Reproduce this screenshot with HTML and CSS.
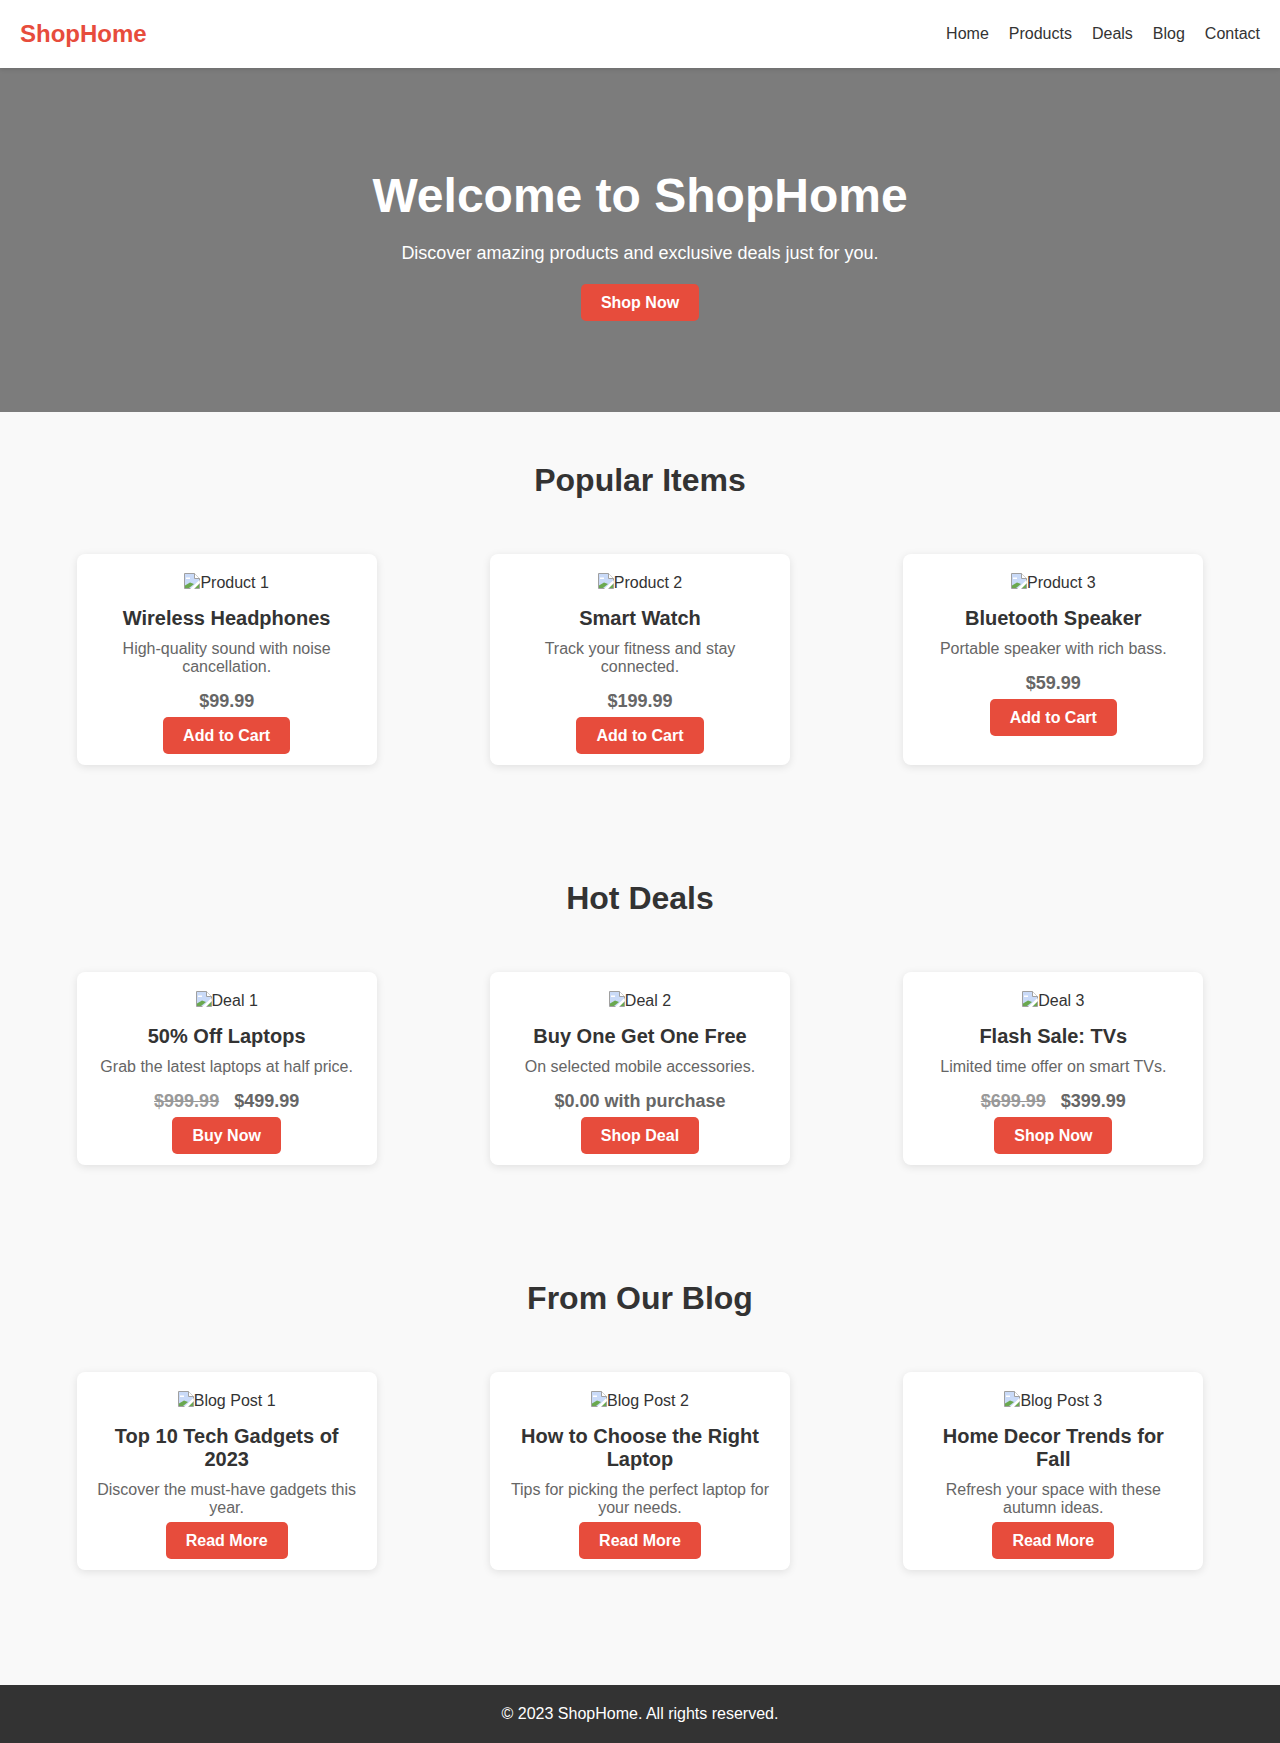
FILE: index.html
```html
<!DOCTYPE html>
<html lang="en">
<head>
    <meta charset="UTF-8">
    <meta name="viewport" content="width=device-width, initial-scale=1.0">
    <title>ShopHome</title>
    <link rel="stylesheet" href="styles.css">
</head>
<body>
    <svg class="sprite" width="0" height="0">
        <symbol id="broken" viewBox="0 0 16 16">
            <path d="M0.5 0.5H10.5L15.5 5.5V15.5H0.5Z" fill="#c9daf8" stroke="#a0a0a0"/>
            <path d="M10.5 0.5V5.5H15.5" fill="#fff" stroke="#a0a0a0"/>
            <path d="M2 4.5h4v1.5H2z" fill="#fff"/>
            <path d="M1 15V12.5L6 9.5L10 11L5 15Z" fill="#6aa84f"/>
            <path d="M9 15L15 9V15Z" fill="#6aa84f"/>
            <path d="M15.5 7L6 16H10L16 10Z" fill="#fff"/>
        </symbol>
    </svg>

    <header class="site-header">
        <div class="logo">ShopHome</div>
        <nav class="nav">
            <a href="#">Home</a>
            <a href="#">Products</a>
            <a href="#">Deals</a>
            <a href="#">Blog</a>
            <a href="#">Contact</a>
        </nav>
    </header>

    <section class="hero">
        <h1>Welcome to ShopHome</h1>
        <p>Discover amazing products and exclusive deals just for you.</p>
        <a class="btn" href="#">Shop Now</a>
    </section>

    <main class="main">
        <section class="section">
            <h2>Popular Items</h2>
            <div class="cards">
                <div class="card">
                    <div class="alt"><svg class="broken"><use href="#broken"/></svg>Product 1</div>
                    <h3>Wireless Headphones</h3>
                    <p>High-quality sound with noise cancellation.</p>
                    <p class="price">$99.99</p>
                    <a class="btn" href="#">Add to Cart</a>
                </div>
                <div class="card">
                    <div class="alt"><svg class="broken"><use href="#broken"/></svg>Product 2</div>
                    <h3>Smart Watch</h3>
                    <p>Track your fitness and stay connected.</p>
                    <p class="price">$199.99</p>
                    <a class="btn" href="#">Add to Cart</a>
                </div>
                <div class="card">
                    <div class="alt"><svg class="broken"><use href="#broken"/></svg>Product 3</div>
                    <h3>Bluetooth Speaker</h3>
                    <p>Portable speaker with rich bass.</p>
                    <p class="price">$59.99</p>
                    <a class="btn" href="#">Add to Cart</a>
                </div>
            </div>
        </section>

        <section class="section">
            <h2>Hot Deals</h2>
            <div class="cards">
                <div class="card">
                    <div class="alt"><svg class="broken"><use href="#broken"/></svg>Deal 1</div>
                    <h3>50% Off Laptops</h3>
                    <p>Grab the latest laptops at half price.</p>
                    <p class="price"><s>$999.99</s><span>$499.99</span></p>
                    <a class="btn" href="#">Buy Now</a>
                </div>
                <div class="card">
                    <div class="alt"><svg class="broken"><use href="#broken"/></svg>Deal 2</div>
                    <h3>Buy One Get One Free</h3>
                    <p>On selected mobile accessories.</p>
                    <p class="price">$0.00 with purchase</p>
                    <a class="btn" href="#">Shop Deal</a>
                </div>
                <div class="card">
                    <div class="alt"><svg class="broken"><use href="#broken"/></svg>Deal 3</div>
                    <h3>Flash Sale: TVs</h3>
                    <p>Limited time offer on smart TVs.</p>
                    <p class="price"><s>$699.99</s><span>$399.99</span></p>
                    <a class="btn" href="#">Shop Now</a>
                </div>
            </div>
        </section>

        <section class="section">
            <h2>From Our Blog</h2>
            <div class="cards">
                <div class="card">
                    <div class="alt"><svg class="broken"><use href="#broken"/></svg>Blog Post 1</div>
                    <h3>Top 10 Tech Gadgets of 2023</h3>
                    <p>Discover the must-have gadgets this year.</p>
                    <a class="btn" href="#">Read More</a>
                </div>
                <div class="card">
                    <div class="alt"><svg class="broken"><use href="#broken"/></svg>Blog Post 2</div>
                    <h3>How to Choose the Right Laptop</h3>
                    <p>Tips for picking the perfect laptop for your needs.</p>
                    <a class="btn" href="#">Read More</a>
                </div>
                <div class="card">
                    <div class="alt"><svg class="broken"><use href="#broken"/></svg>Blog Post 3</div>
                    <h3>Home Decor Trends for Fall</h3>
                    <p>Refresh your space with these autumn ideas.</p>
                    <a class="btn" href="#">Read More</a>
                </div>
            </div>
        </section>
    </main>

    <footer class="site-footer">© 2023 ShopHome. All rights reserved.</footer>
</body>
</html>
```

FILE: styles.css
```css
* {
    box-sizing: border-box;
}

body {
    margin: 0;
    font-family: "Liberation Sans", Arial, sans-serif;
    background-color: #f9f9f9;
    color: #333;
}

.sprite {
    display: block;
    height: 0;
}

.site-header {
    position: relative;
    display: flex;
    justify-content: space-between;
    align-items: center;
    height: 68px;
    padding: 0 20px;
    background: #fff;
    box-shadow: 0 2px 4px rgba(0,0,0,0.1);
}

.logo {
    font-size: 24px;
    font-weight: bold;
    color: #e74c3c;
}

.nav {
    display: flex;
    gap: 20px;
}

.nav a {
    color: #333;
    text-decoration: none;
    font-size: 16px;
}

.hero {
    padding: 100px 20px 91px;
    background: #7c7c7c;
    color: #fff;
    text-align: center;
}

.hero h1 {
    margin: 0 0 20px;
    font-size: 48px;
}

.hero p {
    margin: 0 0 20px;
    font-size: 18px;
}

.btn {
    display: inline-block;
    padding: 10px 20px;
    background: #e74c3c;
    color: #fff;
    font-weight: bold;
    font-size: 16px;
    line-height: 17px;
    text-decoration: none;
    border-radius: 5px;
}

.main {
    padding-bottom: 50px;
}

.section {
    padding: 50px 20px 65px;
    text-align: center;
}

.section h2 {
    margin: 0 0 55px;
    font-size: 32px;
}

.cards {
    display: flex;
    justify-content: space-around;
}

.card {
    width: 300px;
    padding: 20px 20px 11px;
    background: #fff;
    border-radius: 8px;
    box-shadow: 0 2px 8px rgba(0,0,0,0.1);
}

.alt {
    font-size: 16px;
    line-height: 18px;
}

.broken {
    width: 16px;
    height: 16px;
    margin-top: -2px;
    vertical-align: -1px;
}

.card h3 {
    margin: 15px 0 10px;
    font-size: 20px;
}

.card p {
    margin: 0 0 5px;
    font-size: 16px;
    color: #666;
}

.card .price {
    margin: 15px 0 5px;
    font-size: 18px;
    font-weight: bold;
    color: #666;
}

.price s {
    color: #999;
    margin-right: 15px;
}

.site-footer {
    padding: 20px;
    background: #333;
    color: #fff;
    text-align: center;
    font-size: 16px;
}
```
